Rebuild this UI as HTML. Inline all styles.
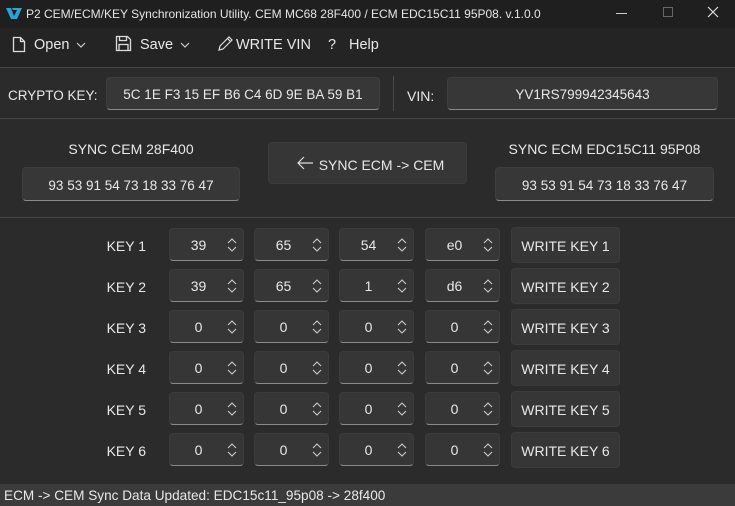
<!DOCTYPE html>
<html><head><meta charset="utf-8"><style>
*{box-sizing:border-box;margin:0;padding:0}
body{width:735px;height:506px;background:#2b2b2b;font-family:"Liberation Sans",sans-serif;color:#e8e8e8;position:relative;overflow:hidden;font-size:14px}
.a{position:absolute}
.title{left:0;top:0;width:735px;height:28px;background:#1f1f1f;font-size:12px;color:#e6e6e6}
.menu{left:0;top:28px;width:735px;height:39px;background:#242424;font-size:14.5px}
.line{height:1px;background:#454545;left:0;width:735px}
.f{background:#373737;border:1px solid #3e3e3e;border-bottom:1px solid #8a8a8a;border-radius:4px;text-align:center;font-size:13.5px}
.b{background:#363636;border:1px solid #3c3c3c;border-radius:4px;text-align:center;font-size:14px}
.lbl{font-size:14px}
.sp{background:#363636;border:1px solid #3c3c3c;border-bottom:1px solid #8a8a8a;border-radius:4px;height:33px;width:75px}
.sp span{position:absolute;left:0;width:57px;text-align:center;top:8px}
.sp svg{position:absolute;right:5px;top:8px}
.status{left:0;top:484px;width:735px;height:22px;background:#3b3b3b;font-size:13.6px;padding:4px 0 0 4px}
</style></head><body>
<div class="a title">
<svg class="a" style="left:6px;top:7px" width="16" height="13" viewBox="0 0 16 13"><path d="M0 1h5l3 8 4-8h4l-5 11H5z" fill="#2aa4d6"/><path d="M6 1h8l-1 2H7z" fill="#2aa4d6"/></svg>
<span class="a" style="left:26px;top:7px">P2 CEM/ECM/KEY Synchronization Utility. CEM MC68 28F400 / ECM EDC15C11 95P08. v.1.0.0</span>
<div class="a" style="left:616px;top:13px;width:11px;height:1px;background:#ccc"></div>
<div class="a" style="left:663px;top:7px;width:10px;height:10px;border:1px solid #666"></div>
<svg class="a" style="left:707px;top:6px" width="12" height="12"><path d="M1 1L11 11M11 1L1 11" stroke="#ddd" stroke-width="1.2"/></svg>
</div>
<div class="a menu">
<svg class="a" style="left:12px;top:8px" width="14" height="17"><path d="M1.5 1.5h7l4 4v10h-11z M8.5 1.5v4h4" fill="none" stroke="#ddd" stroke-width="1.3"/></svg>
<span class="a" style="left:34px;top:9px">Open</span>
<svg class="a" style="left:76px;top:14px" width="10" height="6"><path d="M1 1l4 4 4-4" fill="none" stroke="#ccc" stroke-width="1.2"/></svg>
<svg class="a" style="left:115px;top:7px" width="17" height="17"><path d="M1.5 1.5h11l3 3v11h-14z M4.5 1.5v4h7v-4 M4 15.5v-6h9v6" fill="none" stroke="#ddd" stroke-width="1.3"/></svg>
<span class="a" style="left:140px;top:9px">Save</span>
<svg class="a" style="left:180px;top:14px" width="10" height="6"><path d="M1 1l4 4 4-4" fill="none" stroke="#ccc" stroke-width="1.2"/></svg>
<svg class="a" style="left:217px;top:7px" width="17" height="17"><path d="M2 15l1-4L12 2l3 3-9 9z M10.5 3.5l3 3" fill="none" stroke="#ddd" stroke-width="1.2"/></svg>
<span class="a" style="left:236px;top:9px">WRITE VIN</span>
<span class="a" style="left:328px;top:9px">?</span>
<span class="a" style="left:349px;top:9px">Help</span>
</div>
<div class="a line" style="top:67px"></div>
<span class="a lbl" style="left:8px;top:88px;font-size:13.5px">CRYPTO KEY:</span>
<div class="a f" style="left:106px;top:77px;width:274px;height:33px;padding-top:9px">5C 1E F3 15 EF B6 C4 6D 9E BA 59 B1</div>
<div class="a" style="left:393px;top:76px;width:1px;height:35px;background:#4a4a4a"></div>
<span class="a lbl" style="left:407px;top:88px">VIN:</span>
<div class="a f" style="left:447px;top:77px;width:271px;height:33px;padding-top:9px">YV1RS799942345643</div>
<div class="a line" style="top:118px"></div>
<span class="a lbl" style="left:22px;width:218px;text-align:center;top:141px">SYNC CEM 28F400</span>
<div class="a f" style="left:22px;top:167px;width:218px;height:34px;padding-top:10px">93 53 91 54 73 18 33 76 47</div>
<div class="a b" style="left:268px;top:142px;width:199px;height:42px;padding-top:14px">
<svg style="position:absolute;left:28px;top:13px" width="17" height="14"><path d="M16 7H1M7 1L1 7l6 6" fill="none" stroke="#ddd" stroke-width="1.2"/></svg>
<span style="margin-left:28px">SYNC ECM -&gt; CEM</span></div>
<span class="a lbl" style="left:495px;width:219px;text-align:center;top:141px">SYNC ECM EDC15C11 95P08</span>
<div class="a f" style="left:495px;top:167px;width:219px;height:34px;padding-top:10px">93 53 91 54 73 18 33 76 47</div>
<div class="a line" style="top:217px"></div>

<div id="rows"></div>
<script>
var vals=[["39","65","54","e0"],["39","65","1","d6"],["0","0","0","0"],["0","0","0","0"],["0","0","0","0"],["0","0","0","0"]];
var xs=[169,254,339,425],h="";
vals.forEach(function(r,i){var y=228+i*41;
h+='<span class="a lbl" style="left:90px;width:56px;text-align:right;top:'+(y+10)+'px">KEY '+(i+1)+'</span>';
r.forEach(function(v,j){h+='<div class="a sp" style="left:'+xs[j]+'px;top:'+y+'px"><span>'+v+'</span><svg width="12" height="16"><path d="M2 6l4-4 4 4M2 10l4 4 4-4" fill="none" stroke="#ccc" stroke-width="1.1"/></svg></div>';});
h+='<div class="a b" style="left:511px;top:'+(y-1)+'px;width:109px;height:36px;padding-top:10px">WRITE KEY '+(i+1)+'</div>';});
document.getElementById("rows").innerHTML=h;
</script>
<div class="a status">ECM -&gt; CEM Sync Data Updated: EDC15c11_95p08 -&gt; 28f400</div>
</body></html>
